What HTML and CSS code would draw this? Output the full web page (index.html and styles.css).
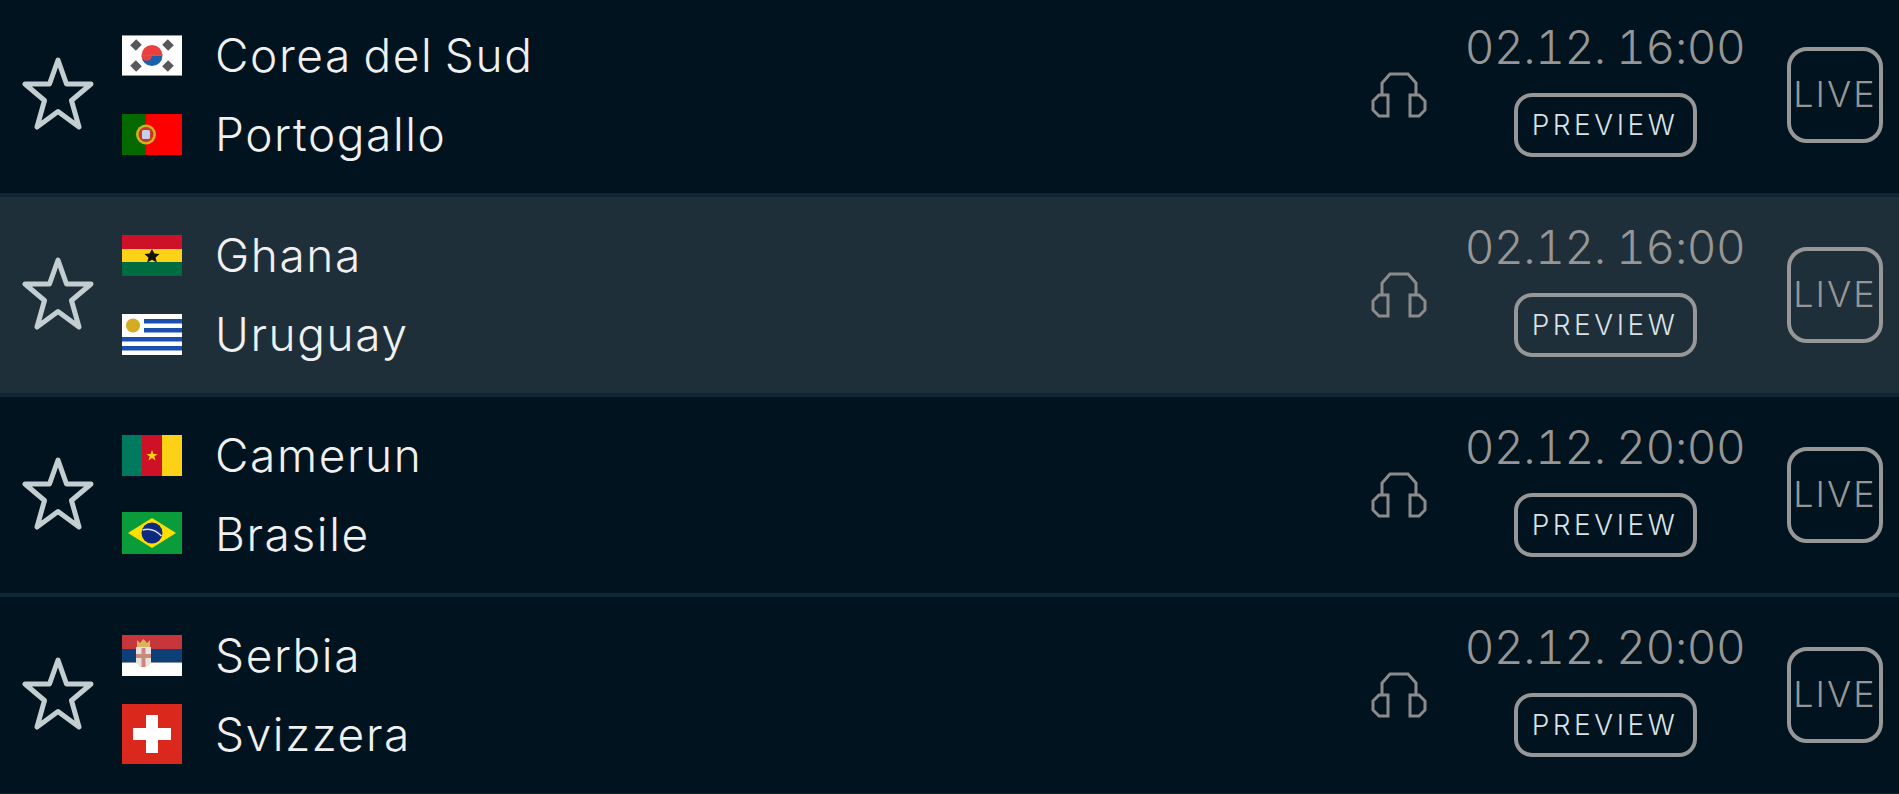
FILE: index.html
```html
<!DOCTYPE html>
<html lang="it">
<head>
  <meta charset="UTF-8">
  <title>Partite</title>
  <link rel="stylesheet" href="styles.css">
</head>
<body>
  <svg class="defs" width="0" height="0" aria-hidden="true">
    <defs>
      <symbol id="star" viewBox="0 0 72 73">
        <path d="M36 3 L44.500 27 L69 27 L49.500 43.500 L57 70 L36 54.500 L15 70 L22.500 43.500 L3 27 L27.500 27 Z" fill="none" stroke="currentColor" stroke-width="5" stroke-linejoin="round"/>
      </symbol>
      <symbol id="phones" viewBox="0 0 56 46">
        <path d="M11 23 V11 L19 2 H37 L45 11 V23" fill="none" stroke="currentColor" stroke-width="3"/>
        <path d="M17 23 H8 L2 29 V38 L8 44 H17 Z M39 23 H48 L54 29 V38 L48 44 H39 Z" fill="none" stroke="currentColor" stroke-width="3"/>
      </symbol>
    </defs>
  </svg>

  <main class="match-list">

    <!-- Corea del Sud - Portogallo -->
    <div class="match">
      <svg class="star"><use href="#star"/></svg>
      <div class="teams">
        <div class="team">
          <span class="flag-box">
            <svg class="flag" viewBox="0 0 60 41">
              <rect width="60" height="41" fill="#fff"/>
              <g class="soft">
                <path d="M19.500 20.500 a10.500 10.500 0 0 1 21 0 Z" fill="#e8403f"/>
                <path d="M19.500 20.500 a10.500 10.500 0 0 0 21 0 Z" fill="#1b62ac"/>
                <path d="M19.500 20.500 a5.250 5.250 0 0 0 10.500 0 a5.250 5.250 0 0 1 10.500 0 Z" fill="#e8403f"/>
                <g fill="none" stroke="#55585c" stroke-width="8">
                  <path d="M11 13 L17 7"/><path d="M43 7 L49 13"/><path d="M11 28 L17 34"/><path d="M43 34 L49 28"/>
                </g>
              </g>
              <rect width="60" height="1" fill="#8f979c"/>
              <rect y="40" width="60" height="1" fill="#8f979c"/>
            </svg>
          </span>
          <span class="name">Corea del Sud</span>
        </div>
        <div class="team">
          <span class="flag-box">
            <svg class="flag" viewBox="0 0 60 41">
              <rect width="60" height="41" fill="#fe0000"/>
              <rect width="24" height="41" fill="#046a00"/>
              <g class="soft">
                <circle cx="24" cy="20.500" r="10" fill="#d2b21c"/>
                <circle cx="24" cy="20.500" r="7.500" fill="#c8382a"/>
                <rect x="20" y="16" width="8" height="9" rx="1.500" fill="#c3d1e6"/>
              </g>
            </svg>
          </span>
          <span class="name">Portogallo</span>
        </div>
      </div>
      <svg class="phones"><use href="#phones"/></svg>
      <div class="kickoff">
        <div class="time">02.12. 16:00</div>
        <button class="preview">PREVIEW</button>
      </div>
      <button class="live">LIVE</button>
    </div>

    <!-- Ghana - Uruguay -->
    <div class="match match-active">
      <svg class="star"><use href="#star"/></svg>
      <div class="teams">
        <div class="team">
          <span class="flag-box">
            <svg class="flag" viewBox="0 0 60 41">
              <rect width="60" height="14" fill="#ce1126"/>
              <rect y="14" width="60" height="13" fill="#fcd116"/>
              <rect y="27" width="60" height="14" fill="#006b3f"/>
              <path class="soft" d="M30 14 L32.400 18.600 L37.500 19 L33.600 22.400 L34.800 27.500 L30 24.800 L25.200 27.500 L26.400 22.400 L22.500 19 L27.600 18.600 Z" fill="#14110a"/>
            </svg>
          </span>
          <span class="name">Ghana</span>
        </div>
        <div class="team">
          <span class="flag-box">
            <svg class="flag" viewBox="0 0 60 41">
              <rect width="60" height="41" fill="#fff"/>
              <g class="soft" fill="#1a4fae">
                <rect x="22" y="5" width="38" height="4.500"/>
                <rect x="22" y="14" width="38" height="4.500"/>
                <rect y="23" width="60" height="4.500"/>
                <rect y="32" width="60" height="4.500"/>
              </g>
              <circle class="soft" cx="11" cy="11.500" r="7" fill="#d4ac22"/>
            </svg>
          </span>
          <span class="name">Uruguay</span>
        </div>
      </div>
      <svg class="phones"><use href="#phones"/></svg>
      <div class="kickoff">
        <div class="time">02.12. 16:00</div>
        <button class="preview">PREVIEW</button>
      </div>
      <button class="live">LIVE</button>
    </div>

    <!-- Camerun - Brasile -->
    <div class="match">
      <svg class="star"><use href="#star"/></svg>
      <div class="teams">
        <div class="team">
          <span class="flag-box">
            <svg class="flag" viewBox="0 0 60 41">
              <rect width="20" height="41" fill="#007a5e"/>
              <rect x="20" width="20" height="41" fill="#ce1126"/>
              <rect x="40" width="20" height="41" fill="#fcd116"/>
              <path class="soft" d="M30 15 L31.500 19 L35.500 19 L32.300 21.500 L33.500 25.500 L30 23 L26.500 25.500 L27.700 21.500 L24.500 19 L28.500 19 Z" fill="#fcd116"/>
            </svg>
          </span>
          <span class="name">Camerun</span>
        </div>
        <div class="team">
          <span class="flag-box">
            <svg class="flag flag-brazil" viewBox="0 0 60 42">
              <rect width="60" height="42" fill="#0a9b3a"/>
              <path class="soft" d="M30 6 L54 21 L30 36 L6 21 Z" fill="#fedf00"/>
              <circle class="soft" cx="30" cy="21" r="10.500" fill="#0e2a80"/>
              <path class="soft" d="M20.500 18 Q31 15 39.500 24" fill="none" stroke="#d8e2ee" stroke-width="1.600"/>
            </svg>
          </span>
          <span class="name">Brasile</span>
        </div>
      </div>
      <svg class="phones"><use href="#phones"/></svg>
      <div class="kickoff">
        <div class="time">02.12. 20:00</div>
        <button class="preview">PREVIEW</button>
      </div>
      <button class="live">LIVE</button>
    </div>

    <!-- Serbia - Svizzera -->
    <div class="match">
      <svg class="star"><use href="#star"/></svg>
      <div class="teams">
        <div class="team">
          <span class="flag-box">
            <svg class="flag" viewBox="0 0 60 41">
              <rect width="60" height="14" fill="#c6363c"/>
              <rect y="14" width="60" height="13.500" fill="#0c4076"/>
              <rect y="27.500" width="60" height="13.500" fill="#fff"/>
              <g class="soft">
                <path d="M15 5 L18 8 L21.500 4 L25 8 L28 5 V12 H15 Z" fill="#d8b45e"/>
                <path d="M14 12 H29 V28 Q21.500 37 14 28 Z" fill="#e8e3df"/>
                <path d="M19.500 13 H23.500 V32 H19.500 Z M14 19 H29 V23 H14 Z" fill="#c9897c"/>
              </g>
            </svg>
          </span>
          <span class="name">Serbia</span>
        </div>
        <div class="team">
          <span class="flag-box">
            <svg class="flag flag-square" viewBox="0 0 60 60">
              <rect width="60" height="60" fill="#da291c"/>
              <path class="soft" d="M24 11 H36 V24 H49 V36 H36 V49 H24 V36 H11 V24 H24 Z" fill="#fff"/>
            </svg>
          </span>
          <span class="name">Svizzera</span>
        </div>
      </div>
      <svg class="phones"><use href="#phones"/></svg>
      <div class="kickoff">
        <div class="time">02.12. 20:00</div>
        <button class="preview">PREVIEW</button>
      </div>
      <button class="live">LIVE</button>
    </div>

  </main>
</body>
</html>
```

FILE: styles.css
```css
html, body {
  height: 100%;
}

body {
  margin: 0;
  overflow: hidden;
  background: #00131e;
  color: #f0f0f0;
  font-family: "Inter", "Liberation Sans", sans-serif;
}

.defs { position: absolute; }

/* the list is scrolled a little in the original */
.match-list {
  margin-top: -3px;
}

.match {
  display: flex;
  align-items: center;
  box-sizing: border-box;
  height: 200px;
  padding: 0 16px 0 22px;
  border-bottom: 4px solid #0e2833;
}

.match-active { background: #1f2f39; }

.star {
  width: 72px;
  height: 73px;
  margin-right: 28px;
  margin-bottom: 3px;
  color: #c3ced1;
  flex: none;
}

.teams {
  flex: 1;
  display: flex;
  flex-direction: column;
}

.team {
  display: flex;
  align-items: center;
  height: 78.500px;
}

.flag-box {
  display: flex;
  align-items: center;
  width: 60px;
  margin-right: 33px;
}

.flag {
  display: block;
  width: 60px;
  height: 41px;
}

.flag-square { height: 60px; }
.flag-brazil { height: 42px; margin-top: -2px; }

.soft { filter: blur(0.6px); }

.name {
  font-size: 46px;
  font-weight: 300;
  letter-spacing: 1.6px;
  word-spacing: -3px;
  line-height: 56px;
  margin-top: -1px;
}

.phones {
  width: 56px;
  height: 46px;
  color: #8b8b8b;
  flex: none;
  margin-right: 28px;
}

.kickoff {
  width: 300px;
  display: flex;
  flex-direction: column;
  align-items: center;
  flex: none;
  margin-right: 32px;
  padding-bottom: 13px;
}

.time {
  font-size: 46px;
  font-weight: 300;
  font-variant-numeric: tabular-nums;
  letter-spacing: -0.500px;
  word-spacing: -1px;
  line-height: 56px;
  white-space: nowrap;
  color: #969696;
  margin-top: -1px;
  margin-bottom: 18px;
}

button {
  background: none;
  font-family: inherit;
  box-sizing: border-box;
  border: 4px solid #979797;
  padding: 0;
}

.preview {
  width: 183px;
  height: 64px;
  border-radius: 18px;
  font-size: 28px;
  font-weight: 300;
  letter-spacing: 3.500px;
  color: #d9e2e8;
}

.live {
  width: 96px;
  height: 96px;
  border-radius: 20px;
  padding-bottom: 3px;
  font-size: 36px;
  font-weight: 300;
  letter-spacing: 2px;
  color: #969696;
  flex: none;
}
```
